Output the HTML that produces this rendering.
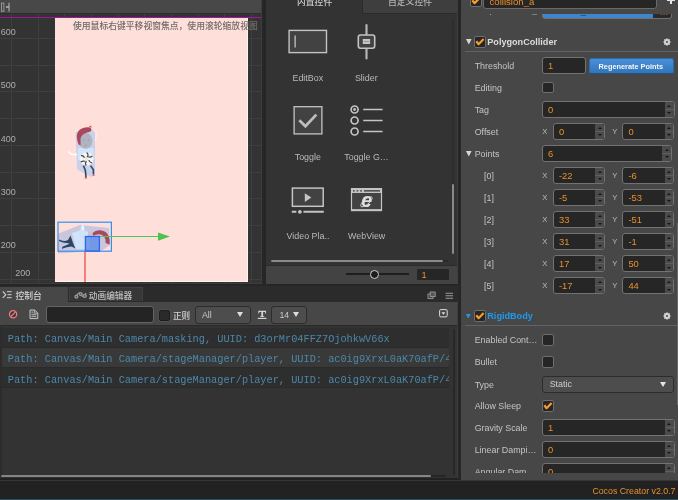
<!DOCTYPE html>
<html><head><meta charset="utf-8"><title>Cocos Creator</title>
<style>
*{box-sizing:border-box;margin:0;padding:0}
html,body{width:678px;height:500px;overflow:hidden;background:#262626}
body{position:relative;font-family:"Liberation Sans","Noto Sans CJK SC",sans-serif;font-size:8.8px;color:#bdbdbd;line-height:1}
.a{position:absolute}
.t{position:absolute;white-space:nowrap;line-height:12px;height:12px}
.lbl{position:absolute;white-space:nowrap;line-height:12px;height:12px;color:#c4c4c4;font-size:8.9px}
.inp{position:absolute;height:17px;background:#262626;border:1px solid #727272;border-radius:3px;overflow:hidden}
.inp .v{position:absolute;left:5px;top:1.8px;line-height:12px;color:#e8902c;font-size:9.4px;white-space:nowrap}
.inp .sp{position:absolute;right:0;top:0;width:8.6px;height:15px;background:#4b4b4b}
.inp .sp:before{content:"";position:absolute;left:2.1px;top:2.8px;border-left:2.2px solid transparent;border-right:2.2px solid transparent;border-bottom:2.6px solid #161616}
.inp .sp:after{content:"";position:absolute;left:2.1px;bottom:2.6px;border-left:2.2px solid transparent;border-right:2.2px solid transparent;border-top:2.6px solid #161616}
.inp .sp i{position:absolute;left:0;right:0;top:7px;height:1px;background:#5e5e5e}
.cb{position:absolute;width:12px;height:11.6px;background:#262626;border:1px solid #6e6e6e;border-radius:2px}
.xy{position:absolute;white-space:nowrap;line-height:12px;height:12px;color:#bcbcbc;font-size:7.7px}
.ico{position:absolute;overflow:visible}
</style></head><body><div id="root" style="position:absolute;left:0;top:0;width:678px;height:500px;overflow:hidden;will-change:transform">

<div class="a" id="scene" style="left:0;top:0;width:262.4px;height:284px;background:#333;overflow:hidden;border-right:1px solid #3c3c3c;border-bottom:1px solid #3c3c3c">
<div class="a" style="left:11.0px;top:14px;width:1px;height:269px;background:#3f3f3f"></div>
<div class="a" style="left:37.7px;top:14px;width:1px;height:269px;background:#3f3f3f"></div>
<div class="a" style="left:64.3px;top:14px;width:1px;height:269px;background:#3f3f3f"></div>
<div class="a" style="left:91.0px;top:14px;width:1px;height:269px;background:#3f3f3f"></div>
<div class="a" style="left:117.7px;top:14px;width:1px;height:269px;background:#3f3f3f"></div>
<div class="a" style="left:144.4px;top:14px;width:1px;height:269px;background:#3f3f3f"></div>
<div class="a" style="left:171.0px;top:14px;width:1px;height:269px;background:#3f3f3f"></div>
<div class="a" style="left:197.7px;top:14px;width:1px;height:269px;background:#3f3f3f"></div>
<div class="a" style="left:224.4px;top:14px;width:1px;height:269px;background:#3f3f3f"></div>
<div class="a" style="left:251.0px;top:14px;width:1px;height:269px;background:#3f3f3f"></div>
<div class="a" style="left:0;top:38.0px;width:262px;height:1px;background:#3f3f3f"></div>
<div class="a" style="left:0;top:64.7px;width:262px;height:1px;background:#3f3f3f"></div>
<div class="a" style="left:0;top:91.4px;width:262px;height:1px;background:#3f3f3f"></div>
<div class="a" style="left:0;top:118.2px;width:262px;height:1px;background:#3f3f3f"></div>
<div class="a" style="left:0;top:144.9px;width:262px;height:1px;background:#3f3f3f"></div>
<div class="a" style="left:0;top:171.6px;width:262px;height:1px;background:#3f3f3f"></div>
<div class="a" style="left:0;top:198.3px;width:262px;height:1px;background:#3f3f3f"></div>
<div class="a" style="left:0;top:225.0px;width:262px;height:1px;background:#3f3f3f"></div>
<div class="a" style="left:0;top:251.8px;width:262px;height:1px;background:#3f3f3f"></div>
<div class="a" style="left:0;top:278.5px;width:262px;height:1px;background:#3f3f3f"></div>
<div class="a" style="left:0;top:0;width:262px;height:13px;background:#484848"></div>
<div class="a" style="left:0;top:13px;width:262px;height:1.4px;background:#2d2d2d"></div>
<svg class="ico" style="left:0px;top:2px" width="11" height="11" viewBox="0 0 11 11"><rect x="1.5" y="1.1" width="2.4" height="8.2" fill="none" stroke="#9c9c9c" stroke-width="0.9"/><path d="M6 5H9" stroke="#b0b0b0" stroke-width="1.6" fill="none"/><path d="M9 0.8V9.6" stroke="#b0b0b0" stroke-width="1.1" fill="none"/></svg>
<div class="a" style="left:55px;top:17.5px;width:193px;height:264.8px;background:#ffdfd9;border-right:1px solid #fff3f0;border-bottom:1px solid #fff3f0"></div>
<div class="a" style="left:0;top:17px;width:262px;height:1.2px;background:#a5129f"></div>
<div class="t" style="left:73px;top:19.5px;font-size:8.8px;font-weight:500;color:#716b6a">使用鼠标右键平移视窗焦点，使用滚轮缩放视图</div>
<div class="t" style="left:0.8px;top:26px;font-size:9px;color:#adadad">600</div>
<div class="t" style="left:0.8px;top:79px;font-size:9px;color:#adadad">500</div>
<div class="t" style="left:0.8px;top:132.5px;font-size:9px;color:#adadad">400</div>
<div class="t" style="left:0.8px;top:185.5px;font-size:9px;color:#adadad">300</div>
<div class="t" style="left:0.8px;top:239px;font-size:9px;color:#adadad">200</div>
<div class="t" style="left:15.2px;top:267px;font-size:9px;color:#adadad">200</div>
<svg class="ico" style="left:64px;top:120px" width="40" height="64" viewBox="64 120 40 64">
<polygon points="75.6,132.5 84,127.5 93,130 95,133.5 95,175 91,177 77,169.5" fill="#cdd0ea"/>
<path d="M68.5 151.3 Q71 155.5 77 154.3" stroke="#fff" stroke-width="1.5" fill="none"/>
<path d="M96 130.5 Q97 136 95.3 141" stroke="#f6eef2" stroke-width="1.2" fill="none"/>
<path d="M78 148 L93.5 148 L94 160 L78 160 Z" fill="#d0e4fb"/>
<ellipse cx="85.6" cy="140.8" rx="6.8" ry="8" fill="#b0b4c0"/>
<path d="M76.8 137 C76.5 130.5 82 126.8 88.5 127.2 C92 127.6 92.3 130.5 89.5 132 C85 132.8 81.5 134.5 80.5 139 L80.6 145.5 L78.6 144.5 C77.5 142 77 139.5 76.8 137 Z" fill="#a9485c"/>
<path d="M88.8 126.4 l2.4 -1 l0.3 2.6 z" fill="#e2552f"/>
<path d="M83.6 139.3 v1.6 M88.2 139.3 v1.6 M85.2 145.4 h1.6" stroke="#8d8f99" stroke-width="0.7"/>
<circle cx="86.6" cy="159" r="6.8" fill="#f4f4f4"/>
<g stroke="#4a4a4a" stroke-width="1.2" fill="none">
<path d="M86.6 152.6 C88.5 154 88.5 156 86.8 157.2"/>
<path d="M92.4 156 C90.5 157.6 89 157.4 88 156.6"/>
<path d="M92 163 C90 162.5 89 161 88.8 160"/>
<path d="M86.2 165.6 C85 163.5 85.4 162 86.4 161"/>
<path d="M80.6 162 C82.5 161 84 161 84.8 161.4"/>
<path d="M81 155.4 C83 155.6 84.2 156.8 84.6 157.8"/>
</g>
<circle cx="86.6" cy="159" r="1.7" fill="#dfe9f7"/>
<path d="M83.4 165.6 L85.4 170.5 L86 177 M90.6 165.6 L93.4 169.8 L93.4 174.3" stroke="#2b4968" stroke-width="1.6" fill="none"/>
<path d="M84.8 177.8 h2 M92.8 175.2 h1.6" stroke="#c6392b" stroke-width="1.3"/>
</svg>
<svg class="ico" style="left:55px;top:218px" width="120" height="66" viewBox="55 218 120 66">
<polygon points="58.5,233.5 80,225 109,228 110,245 102,250.5 58,253.5" fill="#cbc6de"/>
<path d="M72 233 L80 230.5 L81.5 225 L84 225 L84.5 231 L89 232 L90 249 L76 249 Z" fill="#cfe4fb"/>
<path d="M88 232 C90 230 93 230.5 94 233 L92 237 L88 237 Z" fill="#c4c6d2"/>
<path d="M92.5 233.5 C96 229 104 229.5 107.5 234 C110 238 110 242 109.5 244.5 L105.5 243 C106 240 105 236.5 102 235 C99 233.5 95.5 234.5 93.5 236 Z" fill="#a84a5c"/>
<path d="M82.5 225.5 L83.3 230" stroke="#f6fbff" stroke-width="1.5"/>
<path d="M59 239.5 C62 241 65 241.5 68 240 L70.5 235.5 C72 240 73.5 244.5 75.5 248.5 L71.5 246.5 C68.5 247 65.5 247.5 62.5 248.5 L62 247 C65 245.5 67.5 245 69.5 243.5 C66 243 62 242.5 59 241 Z" fill="#2a4866"/>
<path d="M62 248.2 l1.2 0.6" stroke="#b5532e" stroke-width="1"/>
<rect x="58" y="222.2" width="53.4" height="29" fill="none" stroke="#2f92f0" stroke-width="1.2"/>
<rect x="85.4" y="236.5" width="14" height="14.6" fill="#5f8ce6" fill-opacity="0.8" stroke="#2a66f0" stroke-width="1.3"/>
<path d="M100 236.5 H160" stroke="#55c455" stroke-width="1"/>
<polygon points="158,232.6 170,236.6 158,240.8" fill="#4cc24c"/>
<path d="M85 251.6 V282" stroke="#f04c4c" stroke-width="1.3"/>
</svg>
</div>
<div class="a" id="widgets" style="left:266px;top:0;width:191px;height:284px;background:#333;overflow:hidden">
<div class="a" style="left:96px;top:0;width:95px;height:13.8px;background:#3e3e3e;border-left:1px solid #2b2b2b;border-bottom:1px solid #2b2b2b"></div>
<div class="t" style="left:31px;top:-4px;font-size:8.8px;font-weight:500;color:#cfcfcf">内置控件</div>
<div class="t" style="left:122px;top:-4px;font-size:8.8px;font-weight:500;color:#b5b5b5">自定义控件</div>
<div class="a" style="left:186.3px;top:18px;width:1.6px;height:236px;background:#2d2d2d"></div>
<div class="a" style="left:186.3px;top:184px;width:1.8px;height:70px;background:#8a8a8a;border-radius:1px"></div>
<div class="a" style="left:4.5px;top:260px;width:177px;height:1.8px;background:#2a2a2a"></div>
<div class="a" style="left:4.5px;top:260px;width:172px;height:1.8px;background:#8a8a8a;border-radius:1px"></div>
<div class="a" style="left:0;top:265px;width:191px;height:19px;background:#434343;border-top:1px solid #2b2b2b"></div>
<div class="a" style="left:80px;top:273.4px;width:63px;height:1.2px;background:#1e1e1e"></div>
<div class="a" style="left:103.5px;top:269.5px;width:9px;height:9px;border-radius:50%;background:#1c1c1c;border:1.8px solid #d0d0d0"></div>
<div class="a" style="left:151px;top:269px;width:32px;height:11px;background:#262626;border-radius:1px"></div>
<div class="t" style="left:155.5px;top:269px;font-size:9.2px;color:#e8902c">1</div>
<svg class="ico" style="left:0;top:0" width="191" height="284" viewBox="266 0 191 284">
<g fill="none" stroke="#c4c4c4" stroke-width="1.4">
<rect x="289.1" y="30.4" width="37.4" height="22.2" fill="#424242"/>
<path d="M295.1 35.4V47.4" stroke-width="1.3"/>
<path d="M366.5 25V58.5" stroke="#b4b4b4" stroke-width="2.2" stroke-linecap="round"/>
<rect x="358.3" y="35" width="16.4" height="13.3" rx="2.2" fill="#424242" stroke-width="1.6"/>
<rect x="362.8" y="39" width="7.3" height="5" fill="#c6c6c6" stroke="none"/>
<path d="M363.8 41.5H369.2" stroke="#8a8a8a" stroke-width="0.8"/>
<rect x="294.1" y="106.7" width="27.8" height="27.2" fill="#424242" stroke-width="1.3"/>
<path d="M299.3 120.3 L305.4 126.2 L316.3 114.6" stroke="#bdbdbd" stroke-width="2.8"/>
<circle cx="354.6" cy="109.5" r="3.5" stroke-width="1.7"/><circle cx="354.6" cy="120.5" r="3.5" stroke-width="1.7"/><circle cx="354.6" cy="131.5" r="3.5" stroke-width="1.7"/>
<circle cx="354.6" cy="109.5" r="1.4" fill="#c4c4c4" stroke="none"/>
<path d="M363.2 109.5H382.6M363.2 120.5H382.6M363.2 131.5H382.6" stroke-width="1.5"/>
<rect x="292.4" y="188.1" width="30.8" height="18.2" fill="#424242" stroke-width="1.5"/>
<polygon points="304.8,193.3 311.4,197.6 304.8,202" fill="#c4c4c4" stroke="none"/>
<path d="M291.8 211.8H296.4M303.4 211.8H323.8" stroke-width="1.9"/>
<circle cx="299.9" cy="211.8" r="1.9" fill="#c4c4c4" stroke="none"/>
<rect x="351.5" y="188.6" width="30" height="22" fill="#424242" stroke-width="1.2"/>
<rect x="351.5" y="188.6" width="30" height="4.4" fill="#c4c4c4" stroke="none"/>
<path d="M351.5 210H381.5" stroke-width="1.8"/>
<path d="M353 190.8h1.6M356.6 190.8h1.6M360.2 190.8h1.6M364 190.8H380" stroke="#2e2e2e" stroke-width="1.3"/>
<ellipse cx="366.4" cy="201.8" rx="7.2" ry="2.6" transform="rotate(-40 366.4 201.8)" stroke="#cfcfcf" stroke-width="0.9"/>
</g>
<text x="366.8" y="206.9" font-family="Liberation Sans, sans-serif" font-weight="bold" font-style="italic" font-size="19.5" fill="#dedede" text-anchor="middle">e</text>
</svg>
<div class="t" style="left:1.8px;top:71.6px;width:80px;text-align:center;font-size:8.9px;color:#bababa">EditBox</div>
<div class="t" style="left:60.3px;top:71.6px;width:80px;text-align:center;font-size:8.9px;color:#bababa">Slider</div>
<div class="t" style="left:1.8px;top:150.6px;width:80px;text-align:center;font-size:8.9px;color:#bababa">Toggle</div>
<div class="t" style="left:60.5px;top:150.6px;width:80px;text-align:center;font-size:8.9px;color:#bababa">Toggle G…</div>
<div class="t" style="left:2.0px;top:229.6px;width:80px;text-align:center;font-size:8.9px;color:#bababa">Video Pla..</div>
<div class="t" style="left:60.7px;top:229.6px;width:80px;text-align:center;font-size:8.9px;color:#bababa">WebView</div>
</div>
<div class="a" id="console" style="left:0;top:286px;width:457px;height:193px;background:#333;overflow:hidden">
<div class="a" style="left:0;top:0;width:457px;height:16px;background:#2b2b2b"></div>
<div class="a" style="left:0;top:1px;width:67.5px;height:15px;background:#474747"></div>
<div class="a" style="left:69.3px;top:1.2px;width:73.4px;height:14px;background:#373737;border:1px solid #414141;border-bottom:none"></div>
<svg class="ico" style="left:2px;top:4px" width="10" height="10" viewBox="0 0 10 10"><path d="M0.8 1.5L3.8 4.7L0.8 7.9" fill="none" stroke="#d0d0d0" stroke-width="1.1"/><path d="M4.8 1.7H9.6M5.6 4.7H9.6M4.8 7.7H9.6" stroke="#d0d0d0" stroke-width="1" fill="none"/></svg>
<div class="t" style="left:15.5px;top:3.5px;font-size:8.8px;font-weight:500;color:#d2d2d2">控制台</div>
<svg class="ico" style="left:74px;top:4.5px" width="13" height="9" viewBox="74 290.5 13 9"><g fill="none" stroke="#949494" stroke-width="1.35"><path d="M76.6 296.2 C76.8 292.5 79.5 291.5 80.8 293.6 C82 295.6 83.6 297.6 84.8 295.2 C85.3 294.2 85.6 293.2 85.9 292.4"/><circle cx="76.4" cy="296.2" r="1.45" fill="#555"/><circle cx="80.7" cy="293.6" r="1.45" fill="#555"/><circle cx="84.8" cy="295.4" r="1.45" fill="#555"/></g></svg>
<div class="t" style="left:88.8px;top:3.5px;font-size:8.7px;font-weight:500;color:#c0c0c0">动画编辑器</div>
<svg class="ico" style="left:427px;top:5px" width="28" height="10" viewBox="0 0 28 10"><rect x="1" y="3" width="5" height="4.6" fill="#3a3a3a" stroke="#9a9a9a" stroke-width="0.9"/><rect x="3.2" y="1" width="5" height="4.6" fill="#555" stroke="#9a9a9a" stroke-width="0.9"/><path d="M18.5 2.2H26M18.5 4.7H26M18.5 7.2H26" stroke="#9a9a9a" stroke-width="1.1"/></svg>
<div class="a" style="left:0;top:16px;width:457px;height:24px;background:#474747;border-bottom:1px solid #2a2a2a"></div>
<svg class="ico" style="left:8px;top:23px" width="11" height="11" viewBox="0 0 11 11"><circle cx="5.1" cy="5.3" r="3.6" fill="#333a42" stroke="#f07a7a" stroke-width="1.3"/><path d="M2.7 7.7L7.5 2.9" stroke="#f07a7a" stroke-width="1.3"/></svg>
<svg class="ico" style="left:28px;top:23px" width="12" height="11" viewBox="0 0 12 11"><path d="M2 1H6.6L9.8 4V9.6H2Z" fill="#555" stroke="#c4c4c4" stroke-width="1"/><path d="M6.4 1V4.2H9.8" fill="none" stroke="#c4c4c4" stroke-width="0.8"/><path d="M3.6 3.2H5.2M3.6 5.6H8.2M3.6 7.4H8.2" stroke="#c4c4c4" stroke-width="0.8"/></svg>
<div class="a" style="left:45.5px;top:20px;width:108.4px;height:17px;background:#242424;border:1px solid #646464;border-radius:3px"></div>
<div class="cb" style="left:159px;top:23.5px;border-color:#1c1c1c;width:11px;height:11px;background:#2a2a2a;box-shadow:0 0 0 0.5px #5a5a5a"></div>
<div class="t" style="left:173px;top:23.5px;font-size:8.6px;font-weight:500;color:#d0d0d0">正则</div>
<div class="a" style="left:195px;top:19.5px;width:56px;height:18px;background:#4d4d4d;border:1px solid #2c2c2c;border-radius:3px"></div>
<div class="t" style="left:202px;top:23px;font-size:8.8px;color:#c8c8c8">All</div>
<div class="a" style="left:236.8px;top:26.4px;border-left:3.2px solid transparent;border-right:3.2px solid transparent;border-top:5.6px solid #dcdcdc"></div>
<svg class="ico" style="left:257px;top:24px" width="10" height="10" viewBox="257 310 10 10"><path d="M258.3 310.8H266V313.4H265.1V312.1H263.1V316.3H264.2V317H260.2V316.3H261.3V312.1H259.2V313.4H258.3Z" fill="#d4d4d4"/><path d="M257.8 318.4H266.4" stroke="#d4d4d4" stroke-width="1.2"/></svg>
<div class="a" style="left:271px;top:19.5px;width:35.5px;height:18px;background:#4d4d4d;border:1px solid #2c2c2c;border-radius:3px"></div>
<div class="t" style="left:279.4px;top:23.3px;font-size:8.8px;color:#c8c8c8">14</div>
<div class="a" style="left:293.3px;top:26.4px;border-left:3.2px solid transparent;border-right:3.2px solid transparent;border-top:5.6px solid #dcdcdc"></div>
<svg class="ico" style="left:438.5px;top:22.5px" width="9" height="9" viewBox="0 0 9 9"><rect x="0.6" y="0.6" width="7.6" height="7.3" rx="1.2" fill="none" stroke="#dcdcdc" stroke-width="1"/><polygon points="2.4,3.2 6.4,3.2 4.4,5.8" fill="#dcdcdc"/></svg>
<div class="a" style="left:0;top:41.5px;width:449px;height:20.3px;background:#2e2e2e;border-bottom:1px solid #2a2a2a;overflow:hidden"><div class="t" style="left:7.8px;top:5.5px;font-family:'Liberation Mono',monospace;font-size:10.28px;color:#4c87aa">Path: Canvas/Main Camera/masking, UUID: d3orMr04FFZ7OjohkwV66x</div></div>
<div class="a" style="left:0;top:61.8px;width:449px;height:20.3px;background:#393939;border-bottom:1px solid #2a2a2a;overflow:hidden"><div class="t" style="left:7.8px;top:5.5px;font-family:'Liberation Mono',monospace;font-size:10.28px;color:#4c87aa">Path: Canvas/Main Camera/stageManager/player, UUID: ac0ig9XrxL0aK70afP/4cA</div></div>
<div class="a" style="left:0;top:82.1px;width:449px;height:20.3px;background:#2e2e2e;border-bottom:1px solid #2a2a2a;overflow:hidden"><div class="t" style="left:7.8px;top:5.5px;font-family:'Liberation Mono',monospace;font-size:10.28px;color:#4c87aa">Path: Canvas/Main Camera/stageManager/player, UUID: ac0ig9XrxL0aK70afP/4cA</div></div>
<div class="a" style="left:0;top:41px;width:1.6px;height:150px;background:#2c2c2c"></div>
<div class="a" style="left:452.6px;top:43px;width:2.6px;height:146px;background:#282828"></div>
<div class="a" style="left:1px;top:189.2px;width:445px;height:2px;background:#262626"></div>
<div class="a" style="left:1px;top:189px;width:430px;height:2.2px;background:#858585;border-radius:1px"></div>
</div>
<div class="a" style="left:0;top:480px;width:678px;height:20px;background:#222;border-top:1px solid #363636"></div>
<div class="a" style="left:0;top:498.6px;width:678px;height:1.4px;background:#24506a"></div>
<div class="t" style="left:560px;top:485px;width:115.5px;text-align:right;font-size:8.8px;color:#e8902c">Cocos Creator v2.0.7</div>
<div class="a" style="left:457px;top:0;width:1.2px;height:284px;background:#3e3e3e"></div>
<div class="a" style="left:457px;top:285px;width:1.5px;height:17px;background:#2b2b2b"></div>
<div class="a" style="left:457px;top:302px;width:1.2px;height:178px;background:#3e3e3e"></div>
<div class="a" style="left:0;top:477.6px;width:458.2px;height:2.4px;background:#212121"></div>
<div class="a" id="insp" style="left:460.5px;top:0;width:217.5px;height:480px;background:#474747;overflow:hidden">
<div class="a" id="inspc" style="left:-460.5px;top:0;width:678px;height:472.5px;overflow:hidden">
<div class="cb" style="left:470px;top:-4.6px"><svg class="ico" style="left:-1px;top:-1px" width="12" height="11.5" viewBox="0 0 12 11.5"><path d="M2.3 5.3L4.6 8.2L9.6 2.9" fill="none" stroke="#f59a2c" stroke-width="2.2" stroke-linejoin="round"/></svg></div>
<div class="inp" style="left:483px;top:-7.6px;width:173.8px;height:17px;border-color:#6a6a6a"><span class="v" style="left:5.5px;top:2.6px;font-size:9.6px">collision_a</span></div>
<svg class="ico" style="left:667px;top:-3.6px" width="8" height="8" viewBox="0 0 8 8"><path d="M4 0V8M0 4H8" stroke="#e4e4e4" stroke-width="2.1"/></svg>
<div class="a" style="left:490px;top:13.6px;width:1.2px;height:1.4px;background:#a8a8a8"></div>
<div class="a" style="left:532.2px;top:13.8px;width:4.4px;height:1px;background:#808080"></div>
<div class="a" style="left:540px;top:13.5px;width:138px;height:7px;overflow:hidden"><div class="a" style="left:2px;top:-11.2px;width:129.6px;height:17px;background:#3d86cc;border:1px solid #707070;border-radius:3px;overflow:hidden"><div class="a" style="right:0;top:0;width:17.6px;height:16px;background:#2a2a2a"></div><div class="t" style="left:4.5px;top:2px;font-size:9.4px;color:#1f3850">collision_a</div><div class="t" style="right:2px;top:2.4px;font-size:9px;color:#c0702a">…</div></div></div>
<svg class="ico" style="left:465.6px;top:38.8px" width="6.0" height="6.0" viewBox="0 0 6 6"><polygon points="0,0.1 5.6,0.1 2.8,5.5" fill="#d8d8d8"/></svg>
<div class="cb" style="left:474px;top:36px"><svg class="ico" style="left:-1px;top:-1px" width="12" height="11.5" viewBox="0 0 12 11.5"><path d="M2.3 5.3L4.6 8.2L9.6 2.9" fill="none" stroke="#f59a2c" stroke-width="2.2" stroke-linejoin="round"/></svg></div>
<div class="lbl" style="left:487.3px;top:35.6px;font-weight:bold;font-size:9.1px;color:#dcdcdc">PolygonCollider</div>
<svg class="ico" style="left:662.7px;top:37.5px" width="8" height="8" viewBox="0 0 8 8"><circle cx="4" cy="4" r="2.2" fill="none" stroke="#d8d8d8" stroke-width="1.6"/><path d="M4 0.3V7.7M0.3 4H7.7M1.4 1.4L6.6 6.6M6.6 1.4L1.4 6.6" stroke="#d8d8d8" stroke-width="1.1"/><circle cx="4" cy="4" r="1" fill="#474747"/></svg>
<div class="a" style="left:465px;top:50.6px;width:213px;height:1px;background:#626262"></div>
<div class="lbl" style="left:474.7px;top:59.8px;color:#c4c4c4;">Threshold</div>
<div class="inp" style="left:542px;top:56.8px;width:44px;height:17px"><span class="v">1</span></div>
<div class="a" style="left:588.6px;top:57.6px;width:85.6px;height:16.4px;background:linear-gradient(#4a8fd8,#2f76bc);border:1px solid #2f6aa6;border-bottom-color:#24527f;border-radius:2.5px"></div>
<div class="t" style="left:588.2px;top:60.6px;width:85.6px;text-align:center;font-size:8px;font-weight:bold;color:#f6f6f6;transform:scaleX(0.92)">Regenerate Points</div>
<div class="lbl" style="left:474.7px;top:81.8px;color:#c4c4c4;">Editing</div>
<div class="cb" style="left:542px;top:81.8px"></div>
<div class="lbl" style="left:474.7px;top:103.8px;color:#c4c4c4;">Tag</div>
<div class="inp" style="left:542px;top:101px;width:132.5px;height:17px"><span class="v">0</span><span class="sp"><i></i></span></div>
<div class="lbl" style="left:474.7px;top:125.9px;color:#c4c4c4;">Offset</div>
<div class="xy" style="left:542.3px;top:126.2px">X</div>
<div class="inp" style="left:553px;top:123.0px;width:52px;height:17px"><span class="v">0</span><span class="sp"><i></i></span></div>
<div class="xy" style="left:612.3px;top:126.2px">Y</div>
<div class="inp" style="left:622.4px;top:123.0px;width:52px;height:17px"><span class="v">0</span><span class="sp"><i></i></span></div>
<svg class="ico" style="left:465.6px;top:150.5px" width="6.0" height="6.0" viewBox="0 0 6 6"><polygon points="0,0.1 5.6,0.1 2.8,5.5" fill="#d8d8d8"/></svg>
<div class="lbl" style="left:474.7px;top:147.9px;color:#c4c4c4;">Points</div>
<div class="inp" style="left:542px;top:145px;width:130px;height:17px"><span class="v">6</span><span class="sp"><i></i></span></div>
<div class="lbl" style="left:484px;top:169.9px;color:#c4c4c4;">[0]</div>
<div class="xy" style="left:542.3px;top:170.2px">X</div>
<div class="inp" style="left:553px;top:167.0px;width:52px;height:17px"><span class="v">-22</span><span class="sp"><i></i></span></div>
<div class="xy" style="left:612.3px;top:170.2px">Y</div>
<div class="inp" style="left:622.4px;top:167.0px;width:52px;height:17px"><span class="v">-6</span><span class="sp"><i></i></span></div>
<div class="lbl" style="left:484px;top:191.9px;color:#c4c4c4;">[1]</div>
<div class="xy" style="left:542.3px;top:192.2px">X</div>
<div class="inp" style="left:553px;top:189.0px;width:52px;height:17px"><span class="v">-5</span><span class="sp"><i></i></span></div>
<div class="xy" style="left:612.3px;top:192.2px">Y</div>
<div class="inp" style="left:622.4px;top:189.0px;width:52px;height:17px"><span class="v">-53</span><span class="sp"><i></i></span></div>
<div class="lbl" style="left:484px;top:214.0px;color:#c4c4c4;">[2]</div>
<div class="xy" style="left:542.3px;top:214.3px">X</div>
<div class="inp" style="left:553px;top:211.1px;width:52px;height:17px"><span class="v">33</span><span class="sp"><i></i></span></div>
<div class="xy" style="left:612.3px;top:214.3px">Y</div>
<div class="inp" style="left:622.4px;top:211.1px;width:52px;height:17px"><span class="v">-51</span><span class="sp"><i></i></span></div>
<div class="lbl" style="left:484px;top:236.0px;color:#c4c4c4;">[3]</div>
<div class="xy" style="left:542.3px;top:236.3px">X</div>
<div class="inp" style="left:553px;top:233.1px;width:52px;height:17px"><span class="v">31</span><span class="sp"><i></i></span></div>
<div class="xy" style="left:612.3px;top:236.3px">Y</div>
<div class="inp" style="left:622.4px;top:233.1px;width:52px;height:17px"><span class="v">-1</span><span class="sp"><i></i></span></div>
<div class="lbl" style="left:484px;top:258.0px;color:#c4c4c4;">[4]</div>
<div class="xy" style="left:542.3px;top:258.3px">X</div>
<div class="inp" style="left:553px;top:255.1px;width:52px;height:17px"><span class="v">17</span><span class="sp"><i></i></span></div>
<div class="xy" style="left:612.3px;top:258.3px">Y</div>
<div class="inp" style="left:622.4px;top:255.1px;width:52px;height:17px"><span class="v">50</span><span class="sp"><i></i></span></div>
<div class="lbl" style="left:484px;top:280.1px;color:#c4c4c4;">[5]</div>
<div class="xy" style="left:542.3px;top:280.4px">X</div>
<div class="inp" style="left:553px;top:277.20000000000005px;width:52px;height:17px"><span class="v">-17</span><span class="sp"><i></i></span></div>
<div class="xy" style="left:612.3px;top:280.4px">Y</div>
<div class="inp" style="left:622.4px;top:277.20000000000005px;width:52px;height:17px"><span class="v">44</span><span class="sp"><i></i></span></div>
<svg class="ico" style="left:466.0px;top:313.7px" width="4.9" height="4.9" viewBox="0 0 6 6"><polygon points="0,0.1 5.6,0.1 2.8,5.5" fill="#1e9bef"/></svg>
<div class="cb" style="left:474px;top:310.2px"><svg class="ico" style="left:-1px;top:-1px" width="12" height="11.5" viewBox="0 0 12 11.5"><path d="M2.3 5.3L4.6 8.2L9.6 2.9" fill="none" stroke="#f59a2c" stroke-width="2.2" stroke-linejoin="round"/></svg></div>
<div class="lbl" style="left:487.3px;top:310px;font-weight:bold;font-size:9.1px;color:#1e9bef">RigidBody</div>
<svg class="ico" style="left:662.7px;top:311.8px" width="8" height="8" viewBox="0 0 8 8"><circle cx="4" cy="4" r="2.2" fill="none" stroke="#d8d8d8" stroke-width="1.6"/><path d="M4 0.3V7.7M0.3 4H7.7M1.4 1.4L6.6 6.6M6.6 1.4L1.4 6.6" stroke="#d8d8d8" stroke-width="1.1"/><circle cx="4" cy="4" r="1" fill="#474747"/></svg>
<div class="a" style="left:465px;top:324.6px;width:213px;height:1px;background:#626262"></div>
<div class="lbl" style="left:474.7px;top:334.3px;color:#c4c4c4;">Enabled Cont…</div>
<div class="cb" style="left:542px;top:334px"></div>
<div class="lbl" style="left:474.7px;top:356.3px;color:#c4c4c4;">Bullet</div>
<div class="cb" style="left:542px;top:356px"></div>
<div class="lbl" style="left:474.7px;top:378.5px;color:#c4c4c4;">Type</div>
<div class="a" style="left:542px;top:375.5px;width:132px;height:17px;background:#4d4d4d;border:1px solid #2c2c2c;border-radius:3px"></div>
<div class="t" style="left:549.7px;top:378.3px;font-size:8.9px;color:#cfcfcf">Static</div>
<div class="a" style="left:659.6px;top:381.6px;border-left:3.6px solid transparent;border-right:3.6px solid transparent;border-top:5.4px solid #e6e6e6"></div>
<div class="lbl" style="left:474.7px;top:400.3px;color:#c4c4c4;">Allow Sleep</div>
<div class="cb" style="left:542px;top:400px"><svg class="ico" style="left:-1px;top:-1px" width="12" height="11.5" viewBox="0 0 12 11.5"><path d="M2.3 5.3L4.6 8.2L9.6 2.9" fill="none" stroke="#f59a2c" stroke-width="2.2" stroke-linejoin="round"/></svg></div>
<div class="lbl" style="left:474.7px;top:422.3px;color:#c4c4c4;">Gravity Scale</div>
<div class="inp" style="left:542px;top:419px;width:132.5px;height:17px"><span class="v">1</span><span class="sp"><i></i></span></div>
<div class="lbl" style="left:474.7px;top:444.3px;color:#c4c4c4;">Linear Dampi…</div>
<div class="inp" style="left:542px;top:441px;width:132.5px;height:17px"><span class="v">0</span><span class="sp"><i></i></span></div>
<div class="lbl" style="left:474.7px;top:466.3px;color:#c4c4c4;">Angular Dam…</div>
<div class="inp" style="left:542px;top:463px;width:132.5px;height:17px"><span class="v">0</span><span class="sp"><i></i></span></div>
<div class="a" style="left:676.8px;top:223px;width:1.2px;height:182px;background:#6a6a6a"></div>
</div></div>
</div></body></html>
